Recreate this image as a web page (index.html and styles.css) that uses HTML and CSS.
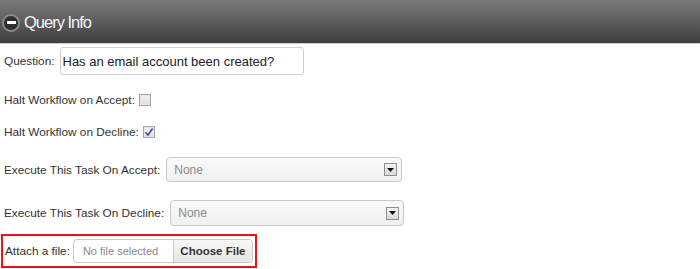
FILE: index.html
```html
<!DOCTYPE html>
<html>
<head>
<meta charset="utf-8">
<link rel="stylesheet" href="styles.css">
</head>
<body>
<div class="panel">
  <div class="header">
    <span class="toggle"><span class="minus"></span></span>
    <span class="title">Query Info</span>
  </div>
  <div class="form">
    <div class="row row-question">
      <span class="label">Question:</span>
      <div class="textbox">Has an email account been created?</div>
    </div>
    <div class="row row-check1">
      <span class="label">Halt Workflow on Accept:</span>
      <span class="check"></span>
    </div>
    <div class="row row-check2">
      <span class="label">Halt Workflow on Decline:</span>
      <span class="check checked">
        <svg width="10" height="10" viewBox="0 0 10 10"><path d="M1.5 5.2 L4 8 L8.6 1.5" fill="none" stroke="#3a4aa8" stroke-width="1.6"/></svg>
      </span>
    </div>
    <div class="row row-sel1">
      <span class="label">Execute This Task On Accept:</span>
      <div class="select sel1">
        <span class="sel-text">None</span>
        <span class="arrow"><svg width="7" height="4" viewBox="0 0 7 4"><path d="M0 0 H7 L3.5 4 Z" fill="#111"/></svg></span>
      </div>
    </div>
    <div class="row row-sel2">
      <span class="label">Execute This Task On Decline:</span>
      <div class="select sel2">
        <span class="sel-text">None</span>
        <span class="arrow"><svg width="7" height="4" viewBox="0 0 7 4"><path d="M0 0 H7 L3.5 4 Z" fill="#111"/></svg></span>
      </div>
    </div>
    <div class="attach">
      <span class="label">Attach a file:</span>
      <div class="file">
        <span class="file-name">No file selected</span>
        <span class="file-btn">Choose File</span>
      </div>
    </div>
  </div>
</div>
</body>
</html>
```
FILE: styles.css
```css
* { box-sizing: border-box; }
body {
  margin: 0;
  background: #fff;
  font-family: "Liberation Sans", Arial, sans-serif;
  color: #333;
}
.header {
  height: 44px;
  background: linear-gradient(#7b7b7b, #3e3e3e);
  border-bottom: 1px solid #cfcfcf;
  display: flex;
  align-items: center;
  padding-left: 2px;
}
.toggle {
  width: 18px;
  height: 18px;
  border-radius: 50%;
  background: #2e2e2e;
  border: 2px solid #8a8a8a;
  display: flex;
  align-items: center;
  justify-content: center;
  margin-top: 2px;
}
.minus {
  width: 9px;
  height: 3px;
  background: #fff;
}
.title {
  margin-left: 4px;
  margin-top: 2px;
  color: #f2f5ff;
  font-size: 16.5px;
  letter-spacing: -1px;
}
.form {
  padding-left: 4px;
}
.row {
  display: flex;
  align-items: center;
}
.label {
  font-size: 11.8px;
  color: #333;
  white-space: nowrap;
  flex-shrink: 0;
}
.row-question { margin-top: 3px; height: 28px; }
.textbox {
  margin-left: 5px;
  width: 244px;
  height: 28px;
  border: 1px solid #cfcfcf;
  border-radius: 3px;
  font-size: 13px;
  color: #222;
  padding-left: 2px;
  display: flex;
  align-items: center;
}
.row-check1 { margin-top: 18px; height: 13px; }
.row-check2 { margin-top: 19px; height: 13px; }
.check {
  margin-left: 4px;
  width: 12px;
  height: 12px;
  border: 1px solid #a5a5a5;
  background: linear-gradient(#f1f1f1, #dedede);
  box-shadow: inset 0 0 0 1px #e6e6e6;
  display: flex;
  align-items: center;
  justify-content: center;
}
.row-sel1 { margin-top: 19px; height: 25px; }
.row-sel2 { margin-top: 18px; height: 26px; }
.select {
  margin-left: 6px;
  height: 100%;
  border: 1px solid #c9c9c9;
  border-radius: 4px;
  background: linear-gradient(#fafafa, #f0f0f0);
  display: flex;
  align-items: center;
  justify-content: space-between;
  padding: 0 4px 0 7px;
}
.sel1 { width: 236px; }
.sel2 { width: 234px; }
.sel-text {
  font-size: 12px;
  color: #8a8a8a;
}
.arrow {
  width: 13px;
  height: 13px;
  border: 1px solid #8f8f8f;
  background: linear-gradient(#f4f4f4, #d9d9d9);
  display: flex;
  align-items: center;
  justify-content: center;
}
.attach {
  margin-top: 8px;
  margin-left: -3px;
  width: 256px;
  height: 34px;
  border: 2px solid #e8141a;
  display: flex;
  align-items: center;
  padding-left: 2px;
}
.file {
  margin-left: 3px;
  width: 180px;
  height: 24px;
  border: 1px solid #c8c8c8;
  border-radius: 4px;
  display: flex;
  overflow: hidden;
  background: #fff;
  flex-shrink: 0;
}
.file-name {
  width: 99px;
  font-size: 11px;
  color: #888;
  display: flex;
  align-items: center;
  padding-left: 9px;
  white-space: nowrap;
}
.file-btn {
  flex: 1;
  border-left: 1px solid #c8c8c8;
  background: linear-gradient(#f7f7f7, #e6e6e6);
  font-size: 11.5px;
  font-weight: bold;
  color: #333;
  display: flex;
  align-items: center;
  justify-content: center;
  white-space: nowrap;
}
```
